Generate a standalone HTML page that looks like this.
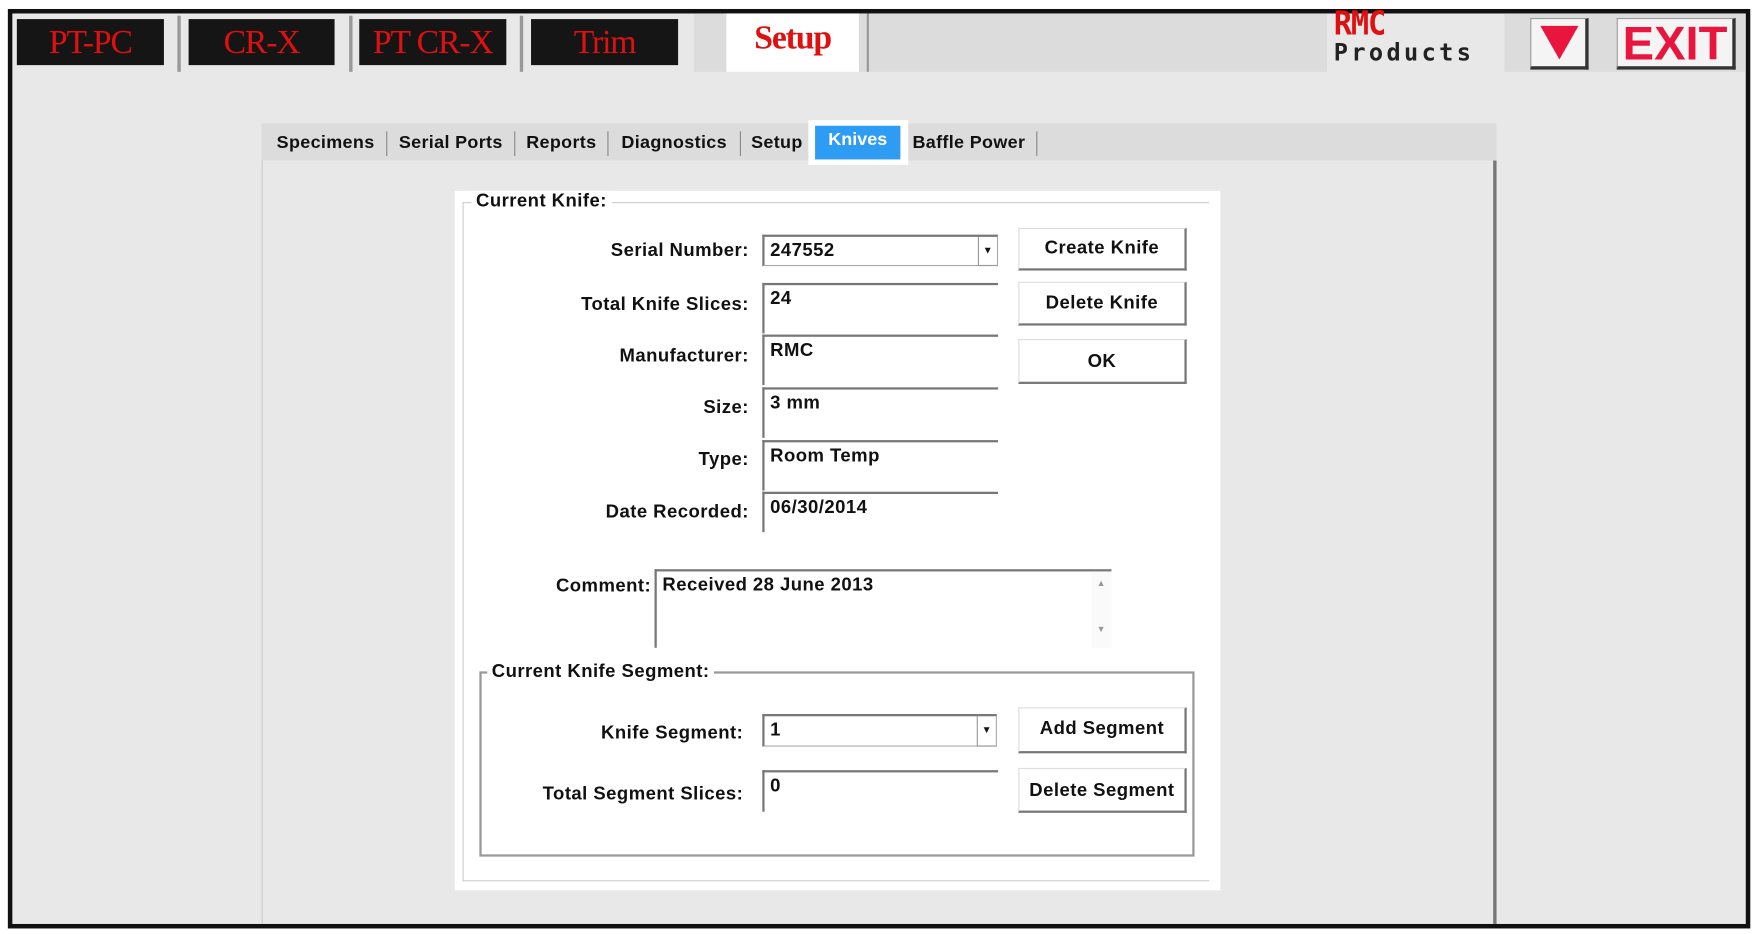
<!DOCTYPE html>
<html><head><meta charset="utf-8"><style>
html,body{margin:0;padding:0;background:#fff;overflow:hidden}
#w{position:absolute;left:0;top:0;width:1565px;height:832px;transform:scale(1.12269);transform-origin:0 0;font-family:"Liberation Sans",sans-serif;font-weight:bold;color:#111}
.a{position:absolute;box-sizing:border-box}
.bt{background:#151515;color:#e01010;font-family:"Liberation Serif",serif;font-weight:normal;font-size:30px;text-align:center;line-height:41px;letter-spacing:-1px}
.sep{background:#999;width:3px}
.tab{position:absolute;top:117px;font-size:16px;height:22px;line-height:22px;border-right:1px solid #888;text-align:center;box-sizing:border-box;letter-spacing:0.3px}
.lbl{position:absolute;font-size:16.5px;text-align:right;width:300px;letter-spacing:0.4px}
.in{position:absolute;background:#fff;border-top:2px solid #777;border-left:2px solid #777;font-size:16.5px;padding:3px 5px;box-sizing:border-box;letter-spacing:0.4px}
.btn{position:absolute;background:#fff;border-right:2px solid #777;border-bottom:2px solid #777;border-top:1px solid #ddd;border-left:1px solid #ddd;font-size:16.5px;text-align:center;box-sizing:border-box;letter-spacing:0.4px}
.dd{position:absolute;right:0;top:0;width:16px;height:100%;border-left:1px solid #999;border-bottom:1px solid #999;font-size:9px;text-align:center;line-height:24px}
</style></head><body><div id="w">
<div class="a" style="left:7px;top:8px;width:1552px;height:819px;border:4px solid #111;background:#e8e8e8"></div>
<div class="a bt" style="left:15px;top:17px;width:131px;height:41px">PT-PC</div>
<div class="a sep" style="left:158px;top:14px;height:50px"></div>
<div class="a bt" style="left:168px;top:17px;width:130px;height:41px">CR-X</div>
<div class="a sep" style="left:311px;top:14px;height:50px"></div>
<div class="a bt" style="left:320px;top:17px;width:131px;height:41px">PT CR-X</div>
<div class="a sep" style="left:463px;top:14px;height:50px"></div>
<div class="a bt" style="left:473px;top:17px;width:131px;height:41px">Trim</div>
<div class="a" style="left:618px;top:12px;width:155px;height:52px;background:#dcdcdc"></div>
<div class="a bt" style="left:647px;top:12px;width:118px;height:52px;background:#fff;line-height:44px;font-weight:bold">Setup</div>
<div class="a" style="left:772px;top:12px;width:2px;height:52px;background:#999"></div>
<div class="a" style="left:774px;top:12px;width:408px;height:52px;background:#dcdcdc"></div>
<div class="a" style="left:1188px;top:10px;font-family:'DejaVu Sans Mono',monospace;font-weight:bold;line-height:25px"><div style="color:#e01010;font-size:27px;letter-spacing:-1px;transform:scaleY(1.1);transform-origin:0 100%">RMC</div><div style="font-size:21px;color:#222;letter-spacing:3px">Products</div></div>
<div class="a" style="left:1340px;top:12px;width:214px;height:52px;background:#dcdcdc"></div>
<div class="a" style="left:1363px;top:16px;width:52px;height:46px;background:#f4f4f4;border:1px solid #999;border-right:3px solid #333;border-bottom:3px solid #333"><svg width="48" height="42" style="position:absolute;left:0;top:0"><polygon points="8,6 42,6 25,36" fill="#e8163e"/></svg></div>
<div class="a" style="left:1440px;top:16px;width:106px;height:46px;background:#f4f4f4;border:1px solid #999;border-right:3px solid #333;border-bottom:3px solid #333;color:#e8163e;font-family:'Liberation Sans',sans-serif;font-size:42px;line-height:44px;text-align:center">EXIT</div>
<div class="a" style="left:233px;top:110px;width:1100px;height:33px;background:#dcdcdc"></div>
<div class="a" style="left:233px;top:143px;width:1100px;height:680px;border-left:1px solid #ccc;border-right:3px solid #777"></div>
<div class="tab" style="left:236px;width:109px">Specimens</div>
<div class="tab" style="left:345px;width:114px">Serial Ports</div>
<div class="tab" style="left:459px;width:83px">Reports</div>
<div class="tab" style="left:542px;width:118px">Diagnostics</div>
<div class="tab" style="left:660px;width:64px;border:none">Setup</div>
<div class="a" style="left:720px;top:107px;width:89px;height:40px;background:#fff"></div>
<div class="a" style="left:726px;top:112px;width:76px;height:30px;background:#2f9cf4;color:#fff;font-size:16px;text-align:center;line-height:26px">Knives</div>
<div class="tab" style="left:803px;width:121px">Baffle Power</div>
<div class="a" style="left:405px;top:170px;width:682px;height:623px;background:#fff"></div>
<div class="a" style="left:412px;top:180px;width:665px;height:605px;border:1px solid #ccc;border-right:none"></div>
<div class="a" style="left:420px;top:170px;background:#fff;font-size:16.5px;padding:0 4px;letter-spacing:0.4px">Current Knife:</div>
<div class="lbl" style="left:367px;top:214px">Serial Number:</div>
<div class="in" style="left:679px;top:209px;width:210px;height:28px;border:2px solid #777;border-right:1px solid #aaa;border-bottom:1px solid #aaa">247552<div class="dd">▼</div></div>
<div class="lbl" style="left:367px;top:262px">Total Knife Slices:</div>
<div class="in" style="left:679px;top:252px;width:210px;height:45px">24</div>
<div class="lbl" style="left:367px;top:308px">Manufacturer:</div>
<div class="in" style="left:679px;top:298px;width:210px;height:45px">RMC</div>
<div class="lbl" style="left:367px;top:354px">Size:</div>
<div class="in" style="left:679px;top:345px;width:210px;height:45px">3 mm</div>
<div class="lbl" style="left:367px;top:400px">Type:</div>
<div class="in" style="left:679px;top:392px;width:210px;height:45px">Room Temp</div>
<div class="lbl" style="left:367px;top:447px">Date Recorded:</div>
<div class="in" style="left:679px;top:438px;width:210px;height:36px">06/30/2014</div>
<div class="btn" style="left:907px;top:203px;width:150px;height:38px;line-height:34px">Create Knife</div>
<div class="btn" style="left:907px;top:251px;width:150px;height:39px;line-height:36px">Delete Knife</div>
<div class="btn" style="left:907px;top:302px;width:150px;height:40px;line-height:38px">OK</div>
<div class="lbl" style="left:280px;top:513px">Comment:</div>
<div class="in" style="left:583px;top:507px;width:407px;height:70px">Received 28 June 2013<div style="position:absolute;right:0;top:0;width:18px;height:100%;background:#fafafa;font-size:8px;color:#999;text-align:center"><div style="margin-top:6px">▲</div><div style="margin-top:32px">▼</div></div></div>
<div class="a" style="left:427px;top:598px;width:637px;height:165px;border:2px solid #999"></div>
<div class="a" style="left:434px;top:589px;background:#fff;font-size:16.5px;padding:0 4px;letter-spacing:0.4px">Current Knife Segment:</div>
<div class="lbl" style="left:362px;top:644px">Knife Segment:</div>
<div class="in" style="left:679px;top:636px;width:209px;height:29px;border:2px solid #777;border-right:1px solid #aaa;border-bottom:1px solid #aaa">1<div class="dd">▼</div></div>
<div class="lbl" style="left:362px;top:698px">Total Segment Slices:</div>
<div class="in" style="left:679px;top:686px;width:210px;height:37px">0</div>
<div class="btn" style="left:907px;top:630px;width:150px;height:41px;line-height:36px">Add Segment</div>
<div class="btn" style="left:907px;top:684px;width:150px;height:40px;line-height:38px">Delete Segment</div>
</div></body></html>
